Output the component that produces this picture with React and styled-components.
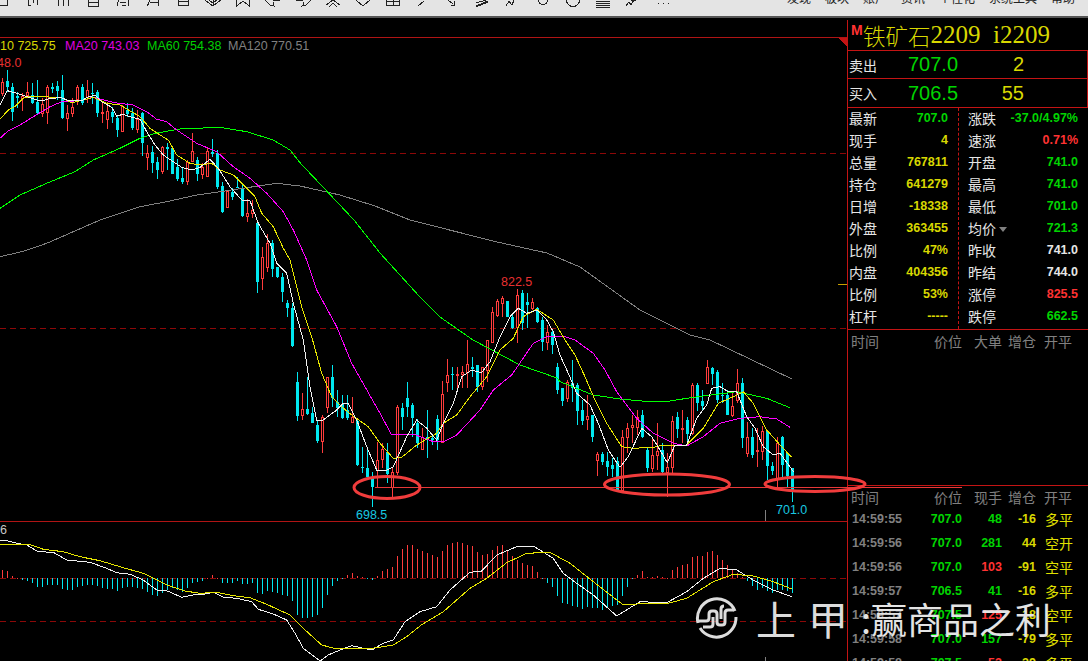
import React from "react";
import styled, { createGlobalStyle } from "styled-components";

const GREEN = "#00d400";
const YELLOW = "#d8d800";
const RED = "#ff3232";
const WHITE = "#e6e6e6";
const GRAY = "#808080";
const LINE = "#c41414";
const CJK = `"Noto Sans CJK SC", "Noto Sans", sans-serif`;
const NUM = `"Liberation Sans", Arial, sans-serif`;

const Global = createGlobalStyle`
  html, body { margin: 0; padding: 0; background: #000; overflow: hidden; }
  #root { width: 1088px; height: 661px; }
`;

const Page = styled.div`
  position: relative;
  width: 1088px;
  height: 661px;
  background: #000;
  overflow: hidden;
  display: flex;
  flex-direction: column;
  font-family: ${CJK};
`;

/* ---------- toolbar ---------- */
const Toolbar = styled.div`
  height: 18px;
  box-sizing: border-box;
  flex: none;
  display: flex;
  align-items: flex-start;
  overflow: hidden;
  background: #e4e4e4;
  border-bottom: 2px solid #555;
`;
const ToolRow = styled.div`
  display: flex;
  margin-left: -12px;
`;
const ToolIcon = styled.svg`
  width: 30px;
  height: 16px;
  flex: none;
  fill: none;
  stroke: #222;
  stroke-width: 1;
`;
const Menu = styled.div`
  margin-left: auto;
  padding-right: 13px;
  display: flex;
  gap: 14px;
  margin-top: -9px;
`;
const MenuItem = styled.span`
  font-size: 12px;
  line-height: 14px;
  color: #222;
  white-space: nowrap;
`;

const toolPaths = [
  "M12 5.5H19.5M19.5 0V6",
  "M10.5 0V6M19.5 0V5M10 5.5H13M15.5 0V3",
  "M10.5 0V6M15.5 0V6M20.5 0V6",
  "M10.5 0V6H20.5V0M10.5 2.5H20.5",
  "M9 6L10.5 0M20.5 0V6M12 2.5H18M13.5 5.5H17.5",
  "M9 6Q11.5 3 11.5 0M20.5 0V6M11.5 2.5H20",
  "M10.5 0V6M20.5 0V6M10.5 5.5H20.5M10.5 1.5H20.5",
  "M7 0L15 6L23 0M15 0V6M11 0L15 3L19 0",
  "M8.5 0V6L15 1L21.5 6V0",
  "M7 0L12 5H15V2M15 5L17 7M15 0H22",
  "M23 0L18 5H15V2M15 5L13 7M15 0H8",
  "M8 5L15 0L22 5M11 7L15 3L19 7",
  "M8 0L15 6L22 0",
  "M8.5 0V6M21.5 0V6M15 0V6M8 1.5H22M8 5.5H22",
  "M10 6L16 1",
  "M10 0L15 4M12.5 5H16.5V1",
  "M8 6L20 1M8 3L18 0M8 7L20 2",
  "M8 6L11 1L14 5L16 0",
  "M10.5 0A4.5 4.5 0 0 0 19.5 0",
  "M8.5 0A6.5 6.5 0 0 0 21.5 0",
  "M8 1H22M8 3H22M8 5H22M8 7H22",
  "M8 6L11 2L13 5L16 0M13 0H18",
  "M9.5 3.5H11M14.5 3.5H16M19.5 3.5H21",
];
const menuItems = ["发现", "板块", "账户", "资讯", "个性化", "系统工具", "帮助"];

/* ---------- main ---------- */
const Main = styled.div`
  flex: 1;
  min-height: 0;
  display: flex;
`;
const Chart = styled.svg`
  width: 847px;
  height: 643px;
  flex: none;
  display: block;
  font-family: ${NUM};
  font-size: 12.5px;
`;

/* ---------- panel ---------- */
const Panel = styled.aside`
  flex: 1;
  min-width: 0;
  margin-top: 2px;
  border-left: 1px solid ${LINE};
  display: flex;
  flex-direction: column;
  overflow: hidden;
`;
const Header = styled.div`
  height: 31px;
  box-sizing: border-box;
  flex: none;
  border-bottom: 1px solid ${LINE};
  display: flex;
  align-items: center;
  padding-left: 3px;
  color: ${YELLOW};
  white-space: pre;
`;
const Badge = styled.b`
  font: bold 14px/14px ${NUM};
  color: ${RED};
  align-self: flex-start;
  margin-top: 3px;
  width: 12px;
  flex: none;
  overflow: visible;
`;
const TitleName = styled.span`
  font: 300 22.5px/32px ${CJK};
`;
const TitleCode = styled.span`
  font: 25px/32px "Liberation Serif", serif;
`;
const QuoteRow = styled.div`
  height: ${(p) => p.$h}px;
  box-sizing: border-box;
  flex: none;
  border-bottom: 1px solid ${LINE};
  border-right: 1px solid ${LINE};
  display: flex;
  align-items: center;
`;
const QuoteLabel = styled.span`
  width: 60px;
  padding-left: 1px;
  box-sizing: border-box;
  font-size: 14px;
  color: ${WHITE};
`;
const QuotePrice = styled.span`
  width: 50px;
  font: 20px ${NUM};
  color: ${GREEN};
`;
const QuoteQty = styled.span`
  width: 66px;
  text-align: right;
  font: 20px ${NUM};
  color: ${YELLOW};
`;
const Stats = styled.div`
  height: 222px;
  box-sizing: border-box;
  flex: none;
  border-bottom: 1px solid ${LINE};
  display: flex;
`;
const StatCol = styled.div`
  width: ${(p) => (p.$right ? "auto" : "110px")};
  flex: ${(p) => (p.$right ? 1 : "none")};
  box-sizing: border-box;
  padding: ${(p) => (p.$right ? "0 10px 0 9px" : "0 10px 0 1px")};
  border-left: ${(p) => (p.$right ? `1px dashed ${LINE}` : "none")};
  display: flex;
  flex-direction: column;
`;
const StatRow = styled.div`
  height: 22px;
  margin-top: ${(p) => (p.$first ? "-1px" : "0")};
  display: flex;
  align-items: center;
  justify-content: space-between;
  white-space: nowrap;
`;
const StatLabel = styled.span`
  font-size: 14px;
  color: ${WHITE};
  display: flex;
  align-items: center;
`;
const Caret = styled.i`
  width: 0;
  height: 0;
  margin: 3px 0 0 3px;
  border-left: 4px solid transparent;
  border-right: 4px solid transparent;
  border-top: 5px solid ${GRAY};
`;
const Val = styled.span`
  font: bold 12.5px ${NUM};
  color: ${(p) => p.$c};
`;
const Grid = styled.div`
  display: grid;
  grid-template-columns: 60px 50px 40px 34px 1fr;
  padding-left: 4px;
  white-space: nowrap;
  align-items: center;
  flex: none;
  height: ${(p) => p.$h}px;
`;
const HeadCell = styled.span`
  font-size: 14px;
  color: ${GRAY};
  text-align: ${(p) => (p.$left ? "left" : "right")};
  margin-left: ${(p) => (p.$left ? "-1px" : "0")};
  padding-left: ${(p) => (p.$pad ? "9px" : "0")};
`;
const Cell = styled.span`
  font: bold 12.5px ${NUM};
  color: ${(p) => p.$c};
  text-align: ${(p) => (p.$left ? "left" : "right")};
`;
const TypeCell = styled.span`
  font-size: 14px;
  color: #e0e000;
  padding-left: 9px;
`;
const Spacer = styled.div`
  flex: none;
  height: 134px;
  box-sizing: border-box;
  border-bottom: 1px solid ${LINE};
`;

/* ---------- overlays ---------- */
const Marks = styled.svg`
  position: absolute;
  left: 0;
  top: 0;
  width: 1088px;
  height: 661px;
  pointer-events: none;
  fill: none;
`;
const Watermark = styled.div`
  position: absolute;
  left: 695px;
  top: 596px;
  height: 44px;
  display: flex;
  align-items: center;
  color: #dcdcdc;
  pointer-events: none;
`;
const Logo = styled.svg`
  width: 44px;
  height: 44px;
  flex: none;
  margin-right: 17px;
  fill: none;
  stroke: #dcdcdc;
  stroke-width: 3;
`;
const BrandChar = styled.span`
  font-size: 40px;
  line-height: 44px;
  font-weight: 400;
  margin-right: 12px;
`;
const Slogan = styled.span`
  font-size: 36px;
  line-height: 44px;
  margin-left: 1px;
  color: #e4e4e4;
  white-space: nowrap;
`;

/* ---------- data ---------- */
const cs = (base, rows) =>
  rows.map(([t, h, a, b, l]) => ({
    up: t === "r",
    h: base + h / 3,
    a: base + a / 3,
    b: base + b / 3,
    l: base + l / 3,
  }));
const R = "r";
const C = "c";
const candles = [
  ...cs(60, [
    [R,55,65,100,108],[C,30,62,80,95],[C,70,82,155,183],[C,95,108,115,145],[R,100,108,115,152],[R,65,95,105,115],
    [C,70,105,130,132],[C,60,125,160,165],[R,115,132,158,172],[R,75,82,155,192],[C,70,82,88,100],[C,62,78,92,120],
    [C,45,90,175,178],[R,135,160,175,212],[R,115,142,158,172],[R,75,82,118,135],[C,72,82,130,135],[R,60,90,112,130],
    [C,68,98,102,132],[C,90,97,158,172],[R,125,155,160,188],[R,125,153,177,208],[C,142,155,172,190],[C,165,175,210,230],
    [R,135,138,213,217],[C,130,150,162,170],[C,145,160,205,210],[R,150,178,207,218],[C,155,160,250,288],[R,255,278,292,330],
    [C,258,275,310,338],[C,290,307,330,357],[R,258,260,332,342],[C,250,260,268,330],[C,265,265,342,342],[C,298,322,358,362],
    [C,325,355,365,372],[R,300,305,362,375],[R,220,272,302,305],[C,290,300,342,362],[R,308,320,342,358],[R,262,272,347,347],
    [C,238,275,282,290],[C,270,280,382,388],[C,365,378,455,458],[R,392,392,440,440],[C,385,395,412,420],[C,350,380,385,385],
    [C,370,385,468,472],[R,418,460,467,485],[R,420,450,460,475],[C,490,490,665,700],[R,560,590,655,690],[R,522,550,622,635],
    [C,540,548,628,650],[C,620,622,650,655],
  ]),
  ...cs(260, [
    [C,40,50,95,125],[C,120,130,145,170],[C,130,145,258,260],[C,335,365,468,483],[R,400,448,466,480],[C,350,448,463,465],
    [C,440,460,488,490],[C,480,495,542,550],[R,465,470,542,580],[R,350,352,440,460],[C,315,350,415,440],[C,390,425,445,470],
    [C,405,432,475,478],[C,405,450,475,480],[R,410,470,485,490],[C,480,483,615,618],[C,560,620,625,640],[C,570,625,650,650],
    [C,635,650,682,740],[R,545,600,630,680],[R,550,568,596,625],[C,550,575,642,670],[R,620,635,680,715],[R,435,442,635,645],
    [C,430,443,470,510],[C,365,415,440,470],[C,430,435,475,530],[C,478,490,550,565],[R,505,532,567,570],[C,450,530,540,595],
    [C,525,535,540,555],[C,465,478,540,570],[R,363,403,545,550],[R,298,345,365,395],[C,322,342,345,390],[R,320,342,345,395],
    [R,317,337,342,385],[R,240,313,335,385],[C,290,322,327,350],[C,315,315,380,395],[R,320,322,378,390],[R,240,240,330,365],
    [R,142,155,245,245],[R,118,123,165,170],[R,108,113,128,170],[C,123,123,170,172],[C,160,172,205,208],[R,87,105,200,250],
    [C,90,100,190,210],[C,100,125,135,205],[R,115,127,145,150],[C,140,145,185,190],[C,170,180,245,272],[R,195,215,245,270],
    [C,208,215,255,283],[C,310,320,390,403],
  ]),
  ...cs(340, [
    [C,145,145,182,197],[R,120,125,175,187],[C,60,130,145,185],[C,130,135,212,255],[C,180,210,243,255],[R,165,228,237,270],
    [C,225,225,290,305],[R,335,342,360,408],[C,335,342,365,375],[C,335,363,380,408],[C,355,375,388,410],[C,350,363,450,450],
    [R,270,290,450,455],[R,250,265,290,340],[R,225,255,262,310],[R,210,230,260,285],[C,210,225,290,295],[C,320,330,385,395],
    [R,295,345,385,395],[R,248,332,345,390],[C,310,330,395,400],[R,340,380,395,470],[R,228,243,380,400],[C,215,230,268,295],
    [R,210,265,268,310],[C,230,240,283,312],[R,130,135,278,285],[C,130,135,190,212],[C,150,183,197,212],[R,60,82,128,130],
    [C,80,85,103,135],[C,90,95,180,188],[C,130,165,166,190],[C,150,165,225,225],[R,160,198,225,230],[R,88,130,180,190],
    [C,115,130,295,325],[R,245,290,338,350],[C,265,292,345,355],[R,265,330,332,380],[R,258,272,332,360],[C,272,272,378,420],
    [C,365,378,392,405],[R,290,308,415,440],[C,288,290,375,415],[C,340,340,408,440],[C,385,385,450,485],
  ]),
];

const map = (sx, sy, bx, by, flat) => {
  const out = [];
  for (let i = 0; i < flat.length; i += 2) out.push(`${(bx + flat[i] / sx).toFixed(1)},${(by + flat[i + 1] / sy).toFixed(1)}`);
  return out;
};
const z9 = (a) => map(3, 3, 0, 60, a);
const z5 = (a) => map(3, 3, 280, 260, a);
const z6 = (a) => map(3, 3, 560, 340, a);
const z7 = (a) => map(3, 3, 0, 520, a);
const z8 = (a) => map(3, 3, 420, 520, a);
const abs = (a) => map(1, 1, 0, 0, a);

const lines = [
  { c: "#808080", pts: [...z9([0,590,65,575,140,550,220,515,300,480,420,440,500,425,590,405,680,392,775,378,830,370,900,378]), ...abs([340,195,375,206,410,220,497,242,547,253,580,267,640,310,690,335,710,340,792,379])] },
  { c: "#00ff00", pts: [...z9([0,445,60,405,140,370,225,335,280,300,360,265,420,235,465,220,540,207,660,202,740,215,820,240,870,270,900,308]), ...abs([354,220,380,253,420,297,440,317,473,340,520,365,557,378]), ...z6([0,125,100,165,180,177,270,185,330,183,400,172,530,155,620,175,690,203])] },
  { c: "#ff00ff", pts: [...z9([0,235,25,212,60,195,100,170,150,140,185,125,240,122,280,112,345,128,400,135,440,155,470,178,500,185,530,210,590,250,650,275,700,320,750,355,800,400,850,455,880,510,900,555]), ...z5([80,0,110,90,170,200,215,310,300,460,335,525,400,522,460,545,490,545,530,525,600,450,640,390,695,345,760,250,800,230,850,228]), ...z6([45,0,100,40,135,90,170,155,230,235,280,280,340,310,380,318,430,290,480,250,540,235,600,230,650,237,690,262])] },
  { c: "#e6e600", pts: [...z9([0,178,25,150,45,140,70,115,95,108,130,110,185,113,215,128,250,120,280,112,320,130,360,135,420,170,450,205,480,225,505,240,530,285,570,310,600,315,635,310,660,330,700,345,735,380,765,410,785,460,820,500,850,565]), ...z5([30,0,65,140,95,230,125,340,155,410,185,440,215,465,265,500,300,550,340,595,365,592,410,555,470,520,490,490,530,465,570,410,620,350,660,270,700,235,730,170,770,148,820,180]), ...z6([15,0,45,45,75,110,105,180,140,250,185,320,220,325,280,322,310,315,380,315,430,265,475,190,520,170,550,155,580,190,620,270,665,320,695,352])] },
  { c: "#f0f0f0", pts: [...z9([0,135,10,115,22,92,45,98,65,105,80,110,97,115,112,120,130,122,150,115,185,113,205,122,245,122,262,112,285,105,305,125,335,142,350,168,370,163,395,172,420,178,440,215,465,255,490,285,520,305,545,322,575,330,600,322,630,298,655,325,690,380,725,420,750,422,775,490,810,550,830,610]), ...z5([0,20,20,40,40,130,70,240,90,380,110,480,130,480,170,450,190,430,205,430,230,480,260,560,290,630,320,630,340,620,380,530,410,480,440,505,470,540,490,490,520,430,545,350,575,330,605,338,630,305,660,230,690,170,715,145,740,160,770,150,800,180,820,215]), ...z6([0,45,25,100,50,160,90,195,115,250,145,330,180,382,205,350,245,265,275,290,300,330,322,368,345,315,380,315,410,235,440,195,455,145,480,140,505,155,530,155,560,230,585,265,610,320,640,345,660,340,690,380,700,395])] },
  { c: "#f0f0f0", pts: [...z7([0,62,25,63,50,70,80,75,115,95,160,97,200,120,270,127,320,145,350,158,390,163,430,180,470,210,500,212,545,232,580,225,610,223,640,217,670,232,710,235,755,245,775,268,820,282,860,300,885,340,910,385,960,423,985,405,1020,390,1055,377,1115,390,1150,370,1180,360,1215,305,1260,275]), ...z8([0,275,50,260,90,210,150,157,185,153,230,105,290,80,340,78,400,115,430,160,470,190,520,225,590,288,660,245,740,248,800,215,850,175,900,145,950,150,1000,180,1060,210,1115,230])] },
  { c: "#e6e600", pts: [...z7([0,72,85,72,130,88,190,95,240,110,300,122,370,143,430,160,460,175,500,195,555,213,600,220,650,217,700,227,750,233,800,253,870,285,910,325,965,375,1010,387,1110,386,1180,375,1220,350,1260,318]), ...z8([0,317,70,275,150,205,200,175,260,128,320,100,390,97,450,130,520,185,610,255,680,250,745,250,800,235,880,185,940,163,1000,168,1060,185,1115,207])] },
];

const macd = [
  24,20,5,0,-5,-10,-14,-27,-28,-22,-22,-20,-32,-36,-36,-28,-25,-20,-20,-25,-30,-32,-33,-38,-30,-28,-28,-30,-33,-43,-52,-55,-45,-37,-30,-35,-42,-30,-14,-12,-8,1,8,0,-15,-15,-15,-10,-18,-18,-15,-45,-48,-40,-42,-45,-50,-55,-70,-110,-120,-120,-118,-110,-90,-50,-25,-10,-2,8,16,5,3,-3,-6,5,22,26,32,65,86,100,100,86,
  80,74,68,62,80,98,105,107,105,100,95,77,68,73,85,95,98,85,65,55,46,40,35,18,-2,-14,-26,-55,-75,-78,-83,-87,-92,-88,-90,-90,-95,-90,-85,-80,-55,-28,-4,10,20,4,2,7,2,0,23,32,38,42,62,65,65,77,80,68,55,38,25,15,4,-10,-25,-35,-30,-40,-45,-35,-35,-40,-45,
];

const stats = [
  [["最新", "707.0", GREEN], ["现手", "4", YELLOW], ["总量", "767811", YELLOW], ["持仓", "641279", YELLOW], ["日增", "-18338", YELLOW], ["外盘", "363455", YELLOW], ["比例", "47%", YELLOW], ["内盘", "404356", YELLOW], ["比例", "53%", YELLOW], ["杠杆", "-----", YELLOW]],
  [["涨跌", "-37.0/4.97%", GREEN], ["速涨", "0.71%", RED], ["开盘", "741.0", GREEN], ["最高", "741.0", GREEN], ["最低", "701.0", GREEN], ["均价", "721.3", GREEN, true], ["昨收", "741.0", WHITE], ["昨结", "744.0", WHITE], ["涨停", "825.5", RED], ["跌停", "662.5", GREEN]],
];
const ticks = [
  ["14:59:55", "707.0", "48", GREEN, "-16", "多平"],
  ["14:59:56", "707.0", "281", GREEN, "44", "空开"],
  ["14:59:56", "707.0", "103", RED, "-91", "空平"],
  ["14:59:57", "706.5", "41", GREEN, "-16", "多平"],
  ["14:59:57", "707.5", "125", RED, "-18", "空平"],
  ["14:59:58", "707.0", "157", GREEN, "-79", "多平"],
  ["14:59:58", "707.5", "53", RED, "-39", "多平"],
];

const Candle = ({ i, d }) => {
  const x = 2 + 5 * i;
  const col = d.up ? "#ff3c3c" : "#00e8f0";
  const a = Math.round(d.a);
  const b = Math.round(d.b);
  return (
    <g>
      <rect x={x} y={d.h} width="1" height={Math.max(1, d.l - d.h)} fill={col} />
      {d.up ? (
        <rect x={x - 0.5} y={a + 0.5} width="2" height={Math.max(1, b - a)} fill="#000" stroke={col} />
      ) : (
        <rect x={x - 1} y={a} width="3" height={Math.max(1, b - a)} fill={col} />
      )}
    </g>
  );
};

export default function App() {
  return (
    <Page>
      <Global />
      <Toolbar>
        <ToolRow>
          {toolPaths.map((d, i) => (
            <ToolIcon key={i} viewBox="0 0 30 16" shapeRendering="crispEdges">
              <path d={d} />
            </ToolIcon>
          ))}
        </ToolRow>
        <Menu>
          {menuItems.map((m) => (
            <MenuItem key={m}>{m}</MenuItem>
          ))}
        </Menu>
      </Toolbar>
      <Main>
        <Chart viewBox="0 18 847 643" shapeRendering="crispEdges">
          <rect x="0" y="37" width="847" height="1" fill="#b01414" />
          <rect x="0" y="521" width="847" height="1" fill="#b01414" />
          <path d="M838 38H847V47Z" fill="#c41414" />
          {[153, 328, 578, 621].map((y) => (
            <line key={y} x1="0" x2="847" y1={y + 0.5} y2={y + 0.5} stroke="#8c0808" strokeDasharray="6 4" />
          ))}
          <rect x="838" y="284" width="9" height="1" fill="#c8a000" />
          <rect x="765" y="510" width="1" height="11" fill="#808080" />
          <rect x="765" y="657" width="1" height="4" fill="#808080" />
          {macd.map((v, i) => (
            <rect
              key={i}
              x={2 + 5 * i}
              y={v > 0 ? 578 - v / 3 : 578}
              width="1"
              height={Math.max(1, Math.abs(v) / 3)}
              fill={v >= 0 ? "#ff3c3c" : "#00e8f0"}
            />
          ))}
          {candles.map((d, i) => (
            <Candle key={i} i={i} d={d} />
          ))}
          {lines.map((l, i) => (
            <polyline key={i} points={l.pts.join(" ")} fill="none" stroke={l.c} strokeWidth="1" />
          ))}
          <g shapeRendering="auto">
            <text x="0" y="50" fill={YELLOW}>10 725.75</text>
            <text x="65" y="50" fill="#e000e0">MA20 743.03</text>
            <text x="147" y="50" fill="#00d000">MA60 754.38</text>
            <text x="228" y="50" fill="#808080">MA120 770.51</text>
            <text x="-3" y="67" fill="#e83030">48.0</text>
            <text x="501" y="286" fill="#e83030">822.5</text>
            <text x="356" y="519" fill="#18c8e0">698.5</text>
            <text x="776" y="514" fill="#18c8e0">701.0</text>
            <text x="0" y="534" fill="#c8c8c8">6</text>
          </g>
        </Chart>
        <Panel>
          <Header>
            <Badge>M</Badge>
            <TitleName>铁矿石</TitleName>
            <TitleCode>2209  i2209</TitleCode>
          </Header>
          <QuoteRow $h={28}>
            <QuoteLabel>卖出</QuoteLabel>
            <QuotePrice>707.0</QuotePrice>
            <QuoteQty>2</QuoteQty>
          </QuoteRow>
          <QuoteRow $h={29}>
            <QuoteLabel>买入</QuoteLabel>
            <QuotePrice>706.5</QuotePrice>
            <QuoteQty>55</QuoteQty>
          </QuoteRow>
          <Stats>
            {stats.map((col, c) => (
              <StatCol key={c} $right={c === 1}>
                {col.map(([label, value, color, caret], r) => (
                  <StatRow key={r} $first={r === 0}>
                    <StatLabel>
                      {label}
                      {caret && <Caret />}
                    </StatLabel>
                    <Val $c={color}>{value}</Val>
                  </StatRow>
                ))}
              </StatCol>
            ))}
          </Stats>
          <Grid $h={22}>
            <HeadCell $left>时间</HeadCell>
            <HeadCell>价位</HeadCell>
            <HeadCell>大单</HeadCell>
            <HeadCell>增仓</HeadCell>
            <HeadCell $left $pad>开平</HeadCell>
          </Grid>
          <Spacer />
          <Grid $h={21}>
            <HeadCell $left>时间</HeadCell>
            <HeadCell>价位</HeadCell>
            <HeadCell>现手</HeadCell>
            <HeadCell>增仓</HeadCell>
            <HeadCell $left $pad>开平</HeadCell>
          </Grid>
          {ticks.map((t, i) => (
            <Grid key={i} $h={24}>
              <Cell $left $c={GRAY}>{t[0]}</Cell>
              <Cell $c={GREEN}>{t[1]}</Cell>
              <Cell $c={t[3]}>{t[2]}</Cell>
              <Cell $c={YELLOW}>{t[4]}</Cell>
              <TypeCell>{t[5]}</TypeCell>
            </Grid>
          ))}
        </Panel>
      </Main>
      <Marks viewBox="0 0 1088 661">
        <line x1="375" x2="962" y1="487.5" y2="487.5" stroke="#e83838" strokeWidth="1" shapeRendering="crispEdges" />
        <g stroke="#f03c3c" strokeWidth="3">
          <ellipse cx="387" cy="487.5" rx="33" ry="11" />
          <ellipse cx="667" cy="484.5" rx="62.5" ry="10.5" />
          <ellipse cx="815" cy="484" rx="50" ry="7.5" />
        </g>
      </Marks>
      <Watermark>
        <Logo viewBox="-22 -22 44 44">
          <path d="M-19 5A19.5 19.5 0 0 1 18 -7" />
          <path d="M19 -1A19.5 19.5 0 0 1 -17 10" />
          <path d="M-18 3H-11Q-8 3 -8 0V-4Q-8 -7 -5 -7H-3Q0 -7 0 -4V4Q0 7 3 7H5Q8 7 8 4V-5Q8 -8 11 -8H17" />
          <path d="M-14 9H-7Q-4 9 -4 6V-1M4 1V-9Q4 -12 7 -12" />
        </Logo>
        <BrandChar>上</BrandChar>
        <BrandChar>甲</BrandChar>
        <Slogan>:赢商品之利</Slogan>
      </Watermark>
    </Page>
  );
}
